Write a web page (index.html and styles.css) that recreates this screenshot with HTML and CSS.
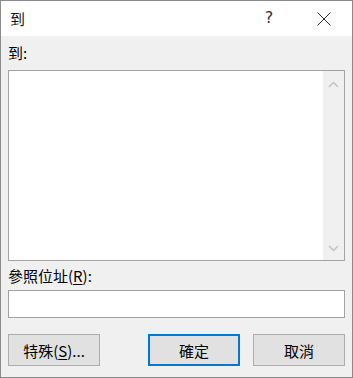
FILE: index.html
```html
<!DOCTYPE html>
<html>
<head>
<meta charset="UTF-8">
<title>到</title>
<link rel="stylesheet" href="styles.css">
</head>
<body>
<div class="dialog">
	<div class="titlebar">
		<span class="title">到</span>
		<span class="help">?</span>
		<span class="close">
			<svg width="14" height="14" viewBox="0 0 14 14"><path d="M0.5 0.5 L13.5 13.5 M13.5 0.5 L0.5 13.5" stroke="#2b2b2b" stroke-width="1" fill="none"/></svg>
		</span>
	</div>
	<div class="content">
		<p class="label">到:</p>
		<div class="listbox">
			<div class="listarea"></div>
			<div class="scrollbar">
				<svg width="11" height="7" viewBox="0 0 11 7"><path d="M1 6 L5.5 1.5 L10 6" stroke="#c3c3c3" stroke-width="1.5" fill="none"/></svg>
				<svg width="11" height="7" viewBox="0 0 11 7"><path d="M1 1 L5.5 5.5 L10 1" stroke="#c3c3c3" stroke-width="1.5" fill="none"/></svg>
			</div>
		</div>
		<p class="label label2">參照位址(<u>R</u>):</p>
		<div class="textbox"></div>
		<div class="buttons">
			<div class="btn">特殊(<u>S</u>)...</div>
			<div class="right">
				<div class="btn default">確定</div>
				<div class="btn">取消</div>
			</div>
		</div>
	</div>
</div>
</body>
</html>
```

FILE: styles.css
```css
body{
	margin:0;
	padding:0;
	font-family:"Noto Sans CJK TC","Noto Sans",sans-serif;
	color:#000;
}
.dialog{
	width:353px;
	height:378px;
	box-sizing:border-box;
	border:1px solid #8a8a8a;
	background:#f0f0f0;
	display:flex;
	flex-direction:column;
}
.titlebar{
	height:35px;
	background:#fff;
	display:flex;
	align-items:center;
	flex-shrink:0;
}
.title{
	font-size:15px;
	margin-left:9px;
	color:#111;
	flex:1;
}
.help{
	font-family:"DejaVu Sans",sans-serif;
	font-size:16px;
	color:#333;
	width:20px;
	text-align:center;
	margin-right:38px;
	margin-top:-2px;
}
.close{
	display:flex;
	width:14px;
	height:14px;
	margin-right:21px;
}
.content{
	padding:6px 7px 0 7px;
	display:flex;
	flex-direction:column;
}
.label{
	margin:0;
	font-size:15px;
	line-height:22px;
	height:22px;
}
.label u{
	text-underline-offset:2px;
}
.listbox{
	margin-top:6px;
	height:191px;
	box-sizing:border-box;
	border:1px solid #a3a3a3;
	background:#fff;
	display:flex;
}
.listarea{
	flex:1;
}
.scrollbar{
	width:21px;
	background:#f0f0f0;
	display:flex;
	flex-direction:column;
	justify-content:space-between;
	align-items:center;
	padding:10px 0 8px 0;
}
.label2{
	margin-top:4px;
}
.textbox{
	margin-top:3px;
	height:28px;
	box-sizing:border-box;
	border:1px solid #a3a3a3;
	background:#fff;
}
.buttons{
	margin-top:16px;
	display:flex;
	justify-content:space-between;
}
.right{
	display:flex;
	gap:13px;
}
.btn{
	width:92px;
	height:32px;
	box-sizing:border-box;
	border:1px solid #adadad;
	background:#e1e1e1;
	font-size:15px;
	display:flex;
	align-items:center;
	justify-content:center;
}
.btn u{
	text-underline-offset:2px;
}
.btn.default{
	border:2px solid #0078d7;
}
```
